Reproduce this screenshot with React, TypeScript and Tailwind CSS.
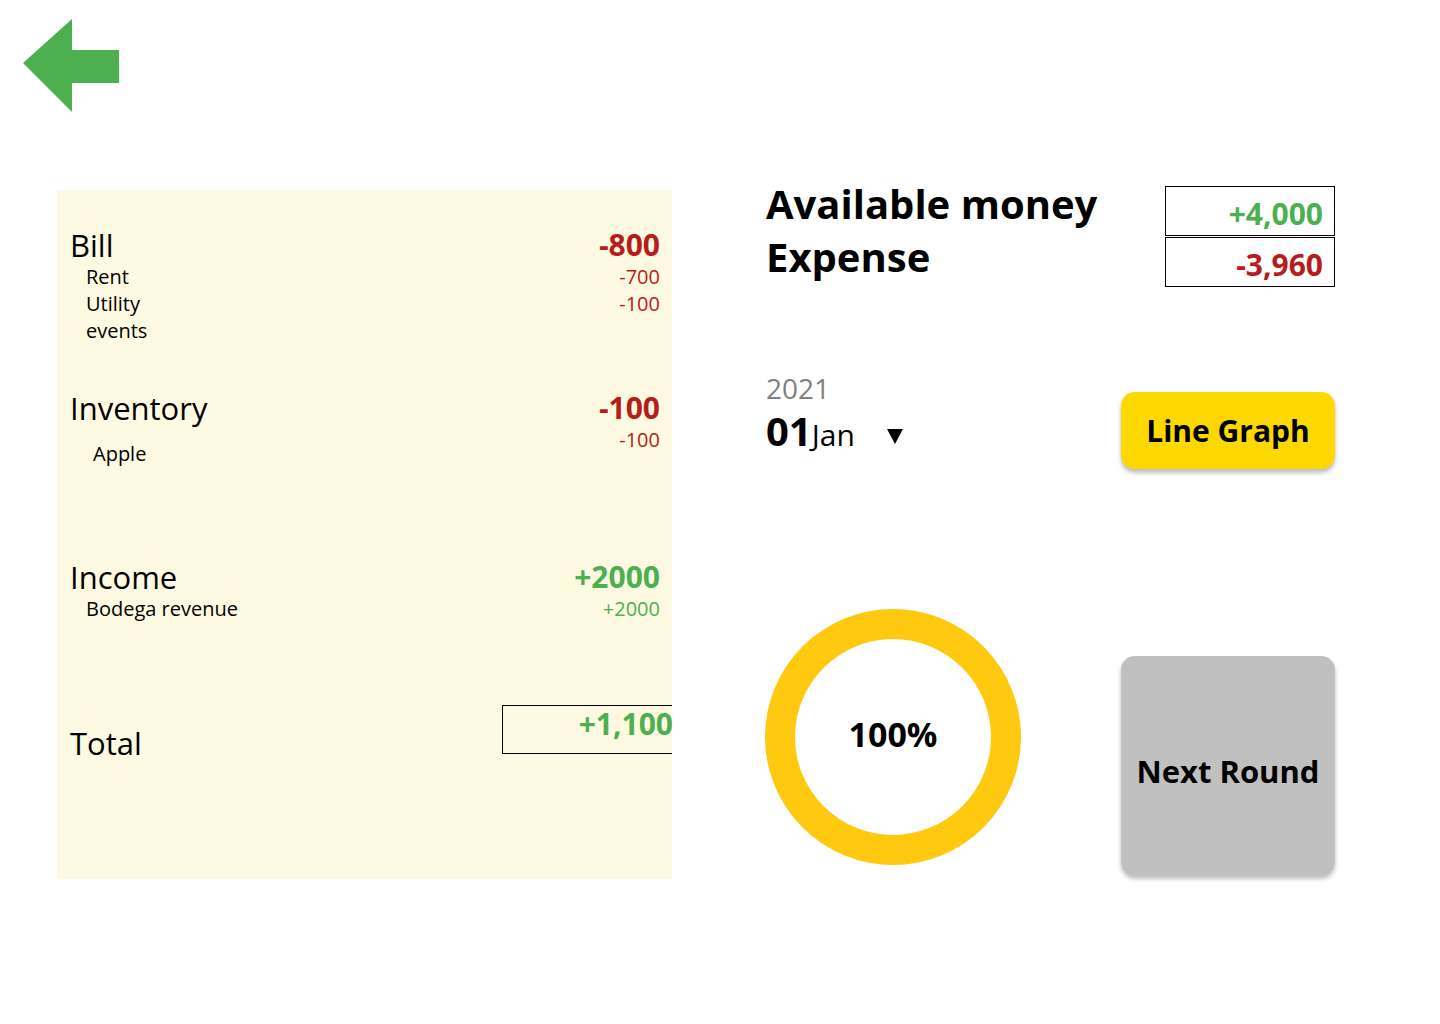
import { ReactNode } from 'react';

const red = 'text-[#B71C1C]';
const green = 'text-[#4CAF50]';

const BackArrow = () => (
  <svg width="96" height="93" viewBox="0 0 96 93" className="block">
    <path d="M0 44 L49 0 L49 31 L96 31 L96 64 L49 64 L49 93 Z" fill="#4CAF50" />
  </svg>
);

const Heading = ({ label, value, tone }: { label: string; value: string; tone: string }) => (
  <div className="flex items-start justify-between leading-[36px]">
    <span className="text-[31px]">{label}</span>
    <span className={`text-[30px] font-bold ${tone}`}>{value}</span>
  </div>
);

const Line = ({ label, value, tone, indent = 'pl-4' }: { label?: string; value?: string; tone?: string; indent?: string }) => (
  <div className="flex items-start justify-between text-[20px] leading-[27px]">
    <span className={indent}>{label}</span>
    <span className={tone}>{value}</span>
  </div>
);

const ValueBox = ({ children, tone }: { children: ReactNode; tone: string }) => (
  <div className={`h-[50px] w-[170px] border border-black pr-[11px] pt-[10px] text-right text-[30px] font-bold leading-[34px] ${tone}`}>
    {children}
  </div>
);

export default function App() {
  return (
    <div className="min-h-screen bg-white font-['Open_Sans','Noto_Sans',sans-serif] text-black">
      <div className="pl-[23px] pt-[19px]">
        <BackArrow />
      </div>

      <div className="mt-[65px] flex items-start pl-[57px]">
        {/* statement panel */}
        <section className="mt-[13px] h-[689px] w-[615px] overflow-hidden bg-[#FEFAE2] pl-[13px] pr-[12px] pt-[37px]">
          <Heading label="Bill" value="-800" tone={red} />
          <Line label="Rent" value="-700" tone={red} />
          <Line label="Utility" value="-100" tone={red} />
          <Line label="events" />

          <div className="mt-[46px] flex items-start justify-between">
            <div>
              <div className="text-[31px] leading-[36px]">Inventory</div>
              <div className="mt-[14px] pl-[23px] text-[20px] leading-[27px]">Apple</div>
            </div>
            <div className="text-right">
              <div className={`text-[30px] font-bold leading-[36px] ${red}`}>-100</div>
              <div className={`text-[20px] leading-[27px] ${red}`}>-100</div>
            </div>
          </div>

          <div className="mt-[92px]">
            <Heading label="Income" value="+2000" tone={green} />
            <Line label="Bodega revenue" value="+2000" tone={green} />
          </div>

          <div className="mt-[83px] flex items-start justify-between">
            <span className="mt-[20px] text-[31px] leading-[36px]">Total</span>
            <div className={`-mr-[26px] h-[49px] w-[184px] border border-black pr-[12px] text-right text-[30px] font-bold leading-[36px] ${green}`}>
              +1,100
            </div>
          </div>
        </section>

        {/* summary column */}
        <div className="ml-[94px] w-[569px]">
          <div className="flex items-start justify-between">
            <div className="text-[40px] font-bold leading-[53px]">
              <div>Available money</div>
              <div>Expense</div>
            </div>
            <div className="mt-[9px] flex flex-col gap-[1px]">
              <ValueBox tone={green}>+4,000</ValueBox>
              <ValueBox tone={red}>-3,960</ValueBox>
            </div>
          </div>

          <div className="mt-[84px] flex items-start justify-between">
            <div>
              <div className="text-[28px] leading-[34px] text-[#808080]">2021</div>
              <div className="mt-[4px] flex items-baseline leading-[44px]">
                <span className="text-[40px] font-bold">01</span>
                <span className="text-[30px]">Jan</span>
                <svg width="16" height="15" viewBox="0 0 16 15" className="ml-[32px] self-center translate-y-[3px]">
                  <path d="M0 0 H16 L8 15 Z" fill="#000" />
                </svg>
              </div>
            </div>
            <button className="mt-[21px] h-[77px] w-[214px] rounded-[14px] bg-[#FCD800] text-[30px] font-bold leading-[36px] shadow-[0_4px_4px_rgba(0,0,0,0.25)]">
              Line Graph
            </button>
          </div>

          <div className="mt-[140px] flex items-start justify-between">
            <div className="-ml-px flex h-[256px] w-[256px] items-center justify-center rounded-full border-[30px] border-[#FEC90F]">
              <span className="-mt-[6px] text-[34px] font-bold leading-[40px]">100%</span>
            </div>
            <button className="mt-[47px] h-[219px] w-[214px] rounded-[14px] bg-[#C0C0C0] pt-[10px] text-[31px] font-bold leading-[36px] shadow-[0_4px_4px_rgba(0,0,0,0.25)]">
              Next Round
            </button>
          </div>
        </div>
      </div>
    </div>
  );
}
